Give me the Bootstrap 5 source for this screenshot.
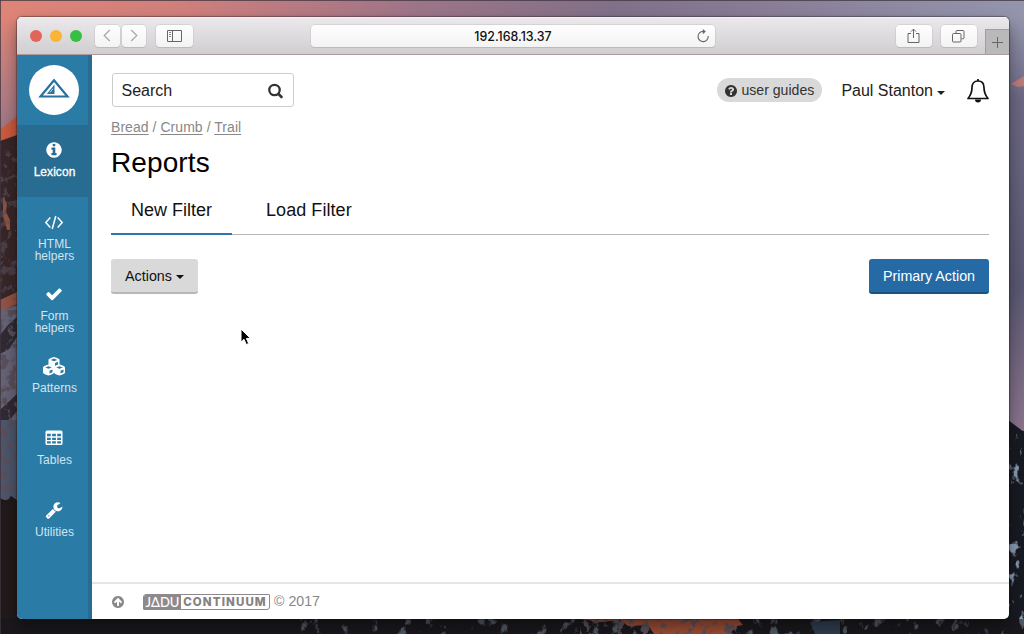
<!DOCTYPE html>
<html lang="en">
<head>
<meta charset="utf-8">
<title>Reports</title>
<link rel="stylesheet" href="https://cdn.jsdelivr.net/npm/bootstrap@5.3.0/dist/css/bootstrap.min.css">
<style>
html,body{height:634px;overflow:hidden}
body{font-family:"Liberation Sans",Arial,sans-serif;font-size:14px;color:#222;background:#1b1819}
svg{display:block;flex:none}
.wallpaper{z-index:-1}
.desk{height:634px;padding:17px 15px 15px 17px}
.win{height:602px;border-radius:5px;overflow:hidden;background:#fff;box-shadow:0 0 1px 1px rgba(30,20,30,.4),0 8px 16px rgba(0,0,0,.4)}
.chrome{height:38px;background:linear-gradient(#ebe9eb,#d0ced0);border-bottom:1px solid #ab9b9e;padding-left:13px;box-shadow:inset 0 1px #f3f2f3}
.dot{width:12px;height:12px;border-radius:50%}
.cbtn{height:22px;background:linear-gradient(#fefefe,#f3f3f3);border-radius:4px;box-shadow:0 0 0 .5px #c3c1c3,0 1px #b4b2b4;color:#666}
.addr{width:404px;font:500 12.4px/22px Inter,sans-serif;color:#111;padding-top:1px}
.newtab{width:24px;height:25px;background:#bab9ba;border:1px solid #a09fa0;border-right:0;border-bottom:0;color:#666}
.side{width:75px;background:#2b7ba7;border-right:4px solid #286c94}
.brand{height:70px}
.disc{width:50px;height:50px;border-radius:50%;background:#fff;margin-left:3px}
.tool{height:72px;padding:16px 0 0 4px;color:#d2e4ef;font-size:12px;line-height:12px;text-align:center;text-decoration:none;letter-spacing:.05px}
.tool svg{color:#fff;margin-bottom:7px;margin-right:1.5px}
.tool.on{background:#286c91;color:#fff;-webkit-text-stroke:.3px #fff;margin-right:-4px;padding-right:4px}
.find{width:182px;height:34px;border:1px solid #ccc;border-radius:3px;font-size:16px;padding:1px 9px 0 8.5px;margin-left:1px}
.guides{height:24px;width:105px;border-radius:12px;background:#d9d9d9;font-size:14.1px;color:#333;padding-top:1px}
.who{font-size:16px;margin-left:19.5px;padding-top:1px}
.caret{width:0;height:0;border:4px solid transparent;border-top-color:currentColor;border-bottom:0}
.crumbs{font-size:14px;line-height:20px;color:#888;margin-top:10px;letter-spacing:.05px}
.crumbs a{color:#888;text-underline-offset:2px}
.title{font-size:28px;line-height:32px;color:#000;margin:10px 0 0;letter-spacing:.1px}
.tabs{height:41px;margin-top:15px;border-bottom:1px solid #b7b7b7;font-size:18px;color:#111}
.tabs a{color:inherit;text-decoration:none;line-height:26px;height:41px;padding:3px 20px 0;margin-right:14px}
.tabs .on{border-bottom:2px solid #2b77a9;width:121px}
.tabs a:last-child{letter-spacing:.06px}
.act{height:35px;border:0;border-radius:3px;font-size:14.3px;padding:3px 0 0;color:#111;background:#d9d9d9;border-bottom:2px solid #b8b8b8;width:87px}
.act.main{width:120px;background:#256aa5;border-bottom-color:#1b5182;color:#fff}
.foot{height:37px;border-top:2px solid #e5e5e5;padding-left:19px;color:#888;font-size:14.2px;padding-top:1px}
.logo{width:127px;height:16px;border:1px solid #8e8a8c;border-radius:3px 1px 3px 1px;margin-left:18px;margin-right:4px;margin-bottom:1px;color:#858183;overflow:hidden}
.logo b{background:#8e8a8c;color:#fff;width:37px;font:500 13px/14px Lato,sans-serif}
.logo span{font:800 11.5px/14px Inter,sans-serif;letter-spacing:1.1px}
.pointer{left:240px;top:328px}
</style>
<script src="https://cdn.jsdelivr.net/npm/bootstrap@5.3.0/dist/js/bootstrap.bundle.min.js"></script>
</head>
<body>
<!-- mountain wallpaper -->
<svg class="wallpaper position-absolute top-0 start-0" width="1024" height="634">
<defs>
<linearGradient id="sky"><stop offset="0" stop-color="#df8577"/><stop offset=".18" stop-color="#cf7f7c"/><stop offset=".4" stop-color="#9f7588"/><stop offset=".6" stop-color="#817089"/><stop offset="1" stop-color="#9495ad"/></linearGradient>
<linearGradient id="left" x2="0" y2="1"><stop offset="0" stop-color="#df8577"/><stop offset=".7" stop-color="#ac7b85"/><stop offset="1" stop-color="#8d737b"/></linearGradient>
<linearGradient id="right" x2="0" y2="1"><stop offset="0" stop-color="#9495ad"/><stop offset=".2" stop-color="#6c6884"/><stop offset=".65" stop-color="#595872"/><stop offset="1" stop-color="#8b748d"/></linearGradient>
<filter id="snow" x="0" y="0" width="1" height="1"><feTurbulence type="fractalNoise" baseFrequency=".1 .07" numOctaves="4" seed="4"/><feColorMatrix values="0 0 0 0 .25  0 0 0 0 .33  0 0 0 0 .43  8 0 0 0 -4.8"/><feComposite in2="SourceGraphic" operator="in"/></filter>
<filter id="rock" x="0" y="0" width="1" height="1"><feTurbulence type="fractalNoise" baseFrequency=".12" numOctaves="4" seed="9"/><feColorMatrix values="0 0 0 0 .1  0 0 0 0 .08  0 0 0 0 .1  9 0 0 0 -4.7"/><feComposite in2="SourceGraphic" operator="in"/></filter>
</defs>
<rect width="1024" height="18" fill="url(#sky)"/>
<rect y="17" width="18" height="130" fill="url(#left)"/>
<path d="M0 130l17-14v20l-17 5z" fill="#cc5a3e"/>
<path d="M0 141l17-6v175H0z" fill="#382628"/>
<path d="M3 196l4 8-1 8 4 8v10H7l-4-14zM0 300l17-8v12l-17 8z" fill="#925344"/>
<path d="M0 311l17-6v195H0z" fill="#666378"/>
<path d="M0 335l8-10 9-8v20l-8 12-9 5zM0 410l17-16v17L0 432z" fill="#302a34"/>
<path d="M0 420h17v80H0z" fill="#4d566c"/>
<path d="M0 498l6 3 5-5 6 4v134H0z" fill="#211a1b"/>
<path d="M0 310h17v190H0z" filter="url(#rock)"/>
<path d="M0 145h17v155H0z" filter="url(#rock)" opacity=".6"/>
<rect x="1008" y="17" width="16" height="414" fill="url(#right)"/>
<path d="M1011 84l13-8v10l-6 1z" fill="#bd7b79"/>
<path d="M1008 420l16 12v202h-16z" fill="#171a22"/>
<path d="M1008 434h16v200h-16z" filter="url(#snow)"/>
<path d="M0 619h1024v15H0z" fill="#1a181c"/>
<path d="M300 619h724v15H300z" filter="url(#snow)" opacity=".5"/>
<path d="M580 619l20 3 20-2 8 6 20-1 6 9h75l8-8 6-1-5-6z" fill="#9b4e35"/>
<path d="M580 619h160v15H580z" filter="url(#rock)"/>
<path d="M810 622l30-2v14h-25z" fill="#303d4f"/>
<path d="M0 .5h1024M.5 0v634" stroke="#403540" stroke-opacity=".75"/>
</svg>

<div class="desk">
<div class="win d-flex flex-column">
  <header class="chrome d-flex align-items-center flex-shrink-0">
    <div class="d-flex gap-2">
      <i class="dot" style="background:#e2655a"></i><i class="dot" style="background:#f9b434"></i><i class="dot" style="background:#35c043"></i>
    </div>
    <div class="d-flex" style="gap:1.5px;margin-left:13px">
      <div class="cbtn d-flex align-items-center justify-content-center" style="width:25px"><svg width="8" height="13" style="margin-right:1px" fill="none" stroke="#aaa" stroke-width="1.3"><path d="M6.8 1L1.2 6.5l5.600 5.500"/></svg></div>
      <div class="cbtn d-flex align-items-center justify-content-center" style="width:24.5px"><svg width="8" height="13" fill="none" stroke="#aaa" stroke-width="1.3"><path d="M1.200 1l5.600 5.500L1.200 12"/></svg></div>
    </div>
    <div class="cbtn d-flex align-items-center justify-content-center" style="width:37px;margin-left:10px"><svg width="16" height="12" fill="none" stroke="#666"><path d="M.5 .5h14v11H.5zM5.500 1v10"/><path d="M2 2.500h2M2 4.500h2M2 6.500h2" stroke="#888"/></svg></div>
    <div class="cbtn addr position-relative text-center" style="margin-left:118px">192.168.13.37
      <svg class="position-absolute" style="right:5px;top:4px" width="14" height="14" fill="none" stroke="#666" stroke-width="1.100"><path d="M7.200 2.400A5.100 5.100 0 1 0 12.200 7"/><path d="M6.800 0l3 2.500-3 2.700z" fill="#666" stroke="none"/></svg></div>
    <div class="cbtn d-flex align-items-center justify-content-center" style="width:36px;margin-left:181px"><svg width="13" height="16" style="margin-right:1px" fill="none" stroke="#666"><path d="M4 5.500H1v9h11v-9H9M6.500 10V1.200M4 3.600l2.500-2.500L9 3.600"/></svg></div>
    <div class="cbtn d-flex align-items-center justify-content-center" style="width:36px;margin-left:9px"><svg width="13" height="13" style="margin-right:1px;margin-top:1px" fill="none" stroke="#666"><rect x=".5" y="3.500" width="8.500" height="8.500" rx="1"/><path d="M4 3.300V1.500q0-1 1-1h6q1 0 1 1v6.300q0 1-1 1H9.500"/></svg></div>
    <div class="newtab d-flex align-items-center justify-content-center align-self-end ms-auto"><svg width="11" height="11" stroke="#666"><path d="M0 5.500h11M5.500 0v11"/></svg></div>
  </header>

  <div class="d-flex flex-fill" style="min-height:0">
    <nav class="side flex-shrink-0">
      <div class="brand d-flex align-items-center justify-content-center"><div class="disc d-flex justify-content-center"><svg width="32" height="22" style="margin-top:12px"><path d="M2.500 19.500L16 3.200 29.500 19.500z" fill="none" stroke="#2672a1" stroke-width="2.200"/><path d="M8.800 17l7.700-9.500V17z" fill="#2672a1"/><path d="M12 15.500l3-3.800" stroke="#fff" stroke-width=".8"/></svg></div></div>
      <a class="tool on d-flex flex-column align-items-center"><svg width="18" height="18" viewBox="0 0 1792 1792" fill="currentColor"><path d="M1152 1376v-160q0-14-9-23t-23-9h-96v-512q0-14-9-23t-23-9h-320q-14 0-23 9t-9 23v160q0 14 9 23t23 9h96v320h-96q-14 0-23 9t-9 23v160q0 14 9 23t23 9h448q14 0 23-9t9-23zm-128-896v-160q0-14-9-23t-23-9h-192q-14 0-23 9t-9 23v160q0 14 9 23t23 9h192q14 0 23-9t9-23zm640 416q0 209-103 385.500t-279.500 279.500-385.500 103-385.500-103-279.500-279.500-103-385.500 103-385.500 279.500-279.500 385.500-103 385.500 103 279.500 279.500 103 385.500z"/></svg>Lexicon</a>
      <a class="tool d-flex flex-column align-items-center"><svg width="20" height="18" fill="none" stroke="currentColor" stroke-width="1.500"><path d="M6.300 4.500L1.800 9.500l4.500 5M13.700 4.500l4.500 5-4.500 5M11.800 3L8.200 16"/></svg>HTML<br>helpers</a>
      <a class="tool d-flex flex-column align-items-center"><svg width="18" height="18" viewBox="0 0 1792 1792" fill="currentColor"><path d="M1671 566q0 40-28 68l-724 724-136 136q-28 28-68 28t-68-28l-136-136-362-362q-28-28-28-68t28-68l136-136q28-28 68-28t68 28l294 295 656-657q28-28 68-28t68 28l136 136q28 28 28 68z"/></svg>Form<br>helpers</a>
      <a class="tool d-flex flex-column align-items-center"><svg width="24" height="20" style="margin:0 2px 5px 0" viewBox="0 0 24 20"><defs><g id="cube"><path d="M5.500 0Q11 1.500 11 2.800v5Q11 9 5.500 11 0 9 0 7.800v-5Q0 1.500 5.500 0z" fill="#fff"/><path d="M2.200 2.900l3.300-1.300 3.300 1.300-3.300 1.300zM6.500 6.100l3-1.300v2.800l-3 1.400z" fill="#2b7ba7"/></g></defs><use href="#cube" x="6.500" y="0"/><use href="#cube" x="1" y="7.600"/><use href="#cube" x="12" y="7.600"/></svg>Patterns</a>
      <a class="tool d-flex flex-column align-items-center"><svg width="18" height="18"><rect x=".5" y="1.500" width="17" height="14.500" rx="1.500" fill="#fff"/><path d="M2 4.800h3.800v2.500H2zM7.100 4.800h3.800v2.500H7.100zM12.200 4.800H16v2.500h-3.800zM2 8.700h3.800v2.400H2zM7.100 8.700h3.800v2.400H7.100zM12.200 8.700H16v2.400h-3.800zM2 12.300h3.800v2.300H2zM7.100 12.300h3.800v2.300H7.100zM12.200 12.300H16v2.300h-3.800z" fill="#2b7ba7"/></svg>Tables</a>
      <a class="tool d-flex flex-column align-items-center"><svg width="18" height="18" viewBox="0 0 1792 1792" fill="currentColor"><path d="M448 1472q0-26-19-45t-45-19-45 19-19 45 19 45 45 19 45-19 19-45zm644-420l-682 682q-37 37-90 37-52 0-91-37l-106-108q-38-36-38-90 0-53 38-91l681-681q39 98 114.500 173.500t173.500 114.500zm634-435q0 39-23 106-47 134-164.500 217.500t-258.500 83.500q-185 0-316.500-131.500t-131.500-316.500 131.500-316.500 316.500-131.500q58 0 121.500 16.500t107.500 46.500q16 11 16 28t-16 28l-293 169v224l193 107q5-3 79-48.500t135.500-81 70.500-35.500q15 0 23.500 10t8.500 25z"/></svg>Utilities</a>
    </nav>

    <div class="flex-fill d-flex flex-column">
      <main class="flex-fill" style="padding:18px 20px 0 19px">
        <div class="d-flex align-items-center">
          <div class="find d-flex align-items-center justify-content-between"><span>Search</span><svg width="17" height="17" viewBox="0 0 17 17" fill="none" stroke="#333"><circle cx="7.500" cy="8" r="5.200" stroke-width="2.300"/><path d="M11.500 12l3 3" stroke-width="2.600" stroke-linecap="round"/></svg></div>
          <div class="guides d-flex align-items-center justify-content-center ms-auto" style="gap:3px"><svg width="14" height="14" viewBox="0 0 1792 1792" fill="#333"><path d="M1024 1376v-192q0-14-9-23t-23-9h-192q-14 0-23 9t-9 23v192q0 14 9 23t23 9h192q14 0 23-9t9-23zm256-672q0-88-55.500-163t-138.500-116-170-41q-243 0-371 213-15 24 8 42l132 100q7 6 19 6 16 0 25-12 53-68 86-92 34-24 86-24 48 0 85.500 26t37.500 59q0 38-20 61t-68 45q-63 28-115.500 86.500t-52.500 125.500v36q0 14 9 23t23 9h192q14 0 23-9t9-23q0-19 21.500-49.500t54.500-49.500q32-18 49-28.500t46-35 44.500-48 28-60.500 12.500-81zm384 192q0 209-103 385.500t-279.500 279.500-385.500 103-385.500-103-279.500-279.500-103-385.500 103-385.500 279.500-279.500 385.500-103 385.500 103 279.500 279.500 103 385.500z"/></svg>user guides</div>
          <div class="who d-flex align-items-center">Paul Stanton<i class="caret ms-1 mt-1"></i></div>
          <svg width="24" height="26" style="margin:1px -.5px 0 20.500px" fill="none" stroke="#111" stroke-width="1.700"><path d="M12 3C7.800 3 6 6 6 9.500c0 5.500-1.500 8-4 11h20c-2.500-3-4-5.500-4-11C18 6 16.200 3 12 3z" stroke-linejoin="round"/><path d="M12 1v2"/><path d="M9 21.500h6a3 3 0 0 1-6 0z" fill="#111" stroke="none"/></svg>
        </div>
        <div class="crumbs"><a href="#">Bread</a> / <a href="#">Crumb</a> / <a href="#">Trail</a></div>
        <h1 class="title">Reports</h1>
        <div class="tabs d-flex"><a class="on">New Filter</a><a>Load Filter</a></div>
        <div class="d-flex justify-content-between" style="margin-top:24px">
          <button class="act d-flex align-items-center justify-content-center">Actions<i class="caret ms-1"></i></button>
          <button class="act main">Primary Action</button>
        </div>
      </main>
      <footer class="foot d-flex align-items-center">
        <svg width="14" height="14" viewBox="0 0 1792 1792" fill="#888"><path d="M1412 895q0-27-18-45l-362-362-91-91q-18-18-45-18t-45 18l-91 91-362 362q-18 18-18 45t18 45l91 91q18 18 45 18t45-18l189-189v502q0 26 19 45t45 19h128q26 0 45-19t19-45v-502l189 189q19 19 45 19t45-19l91-91q18-18 18-45zm252 1q0 209-103 385.500t-279.500 279.500-385.500 103-385.500-103-279.500-279.500-103-385.500 103-385.500 279.500-279.500 385.500-103 385.500 103 279.500 279.500 103 385.500z"/></svg>
        <div class="logo d-flex"><b class="text-center">J&#916;DU</b><span class="flex-fill text-center">CONTINUUM</span></div>
        © 2017
      </footer>
    </div>
  </div>
</div>
</div>
<svg class="pointer position-absolute" width="13" height="19"><path d="M1 1v13.200l3-2.900 2.300 5.200 2.400-1-2.300-5.100h4.100z" fill="#000" stroke="#fff"/></svg>
</body>
</html>
